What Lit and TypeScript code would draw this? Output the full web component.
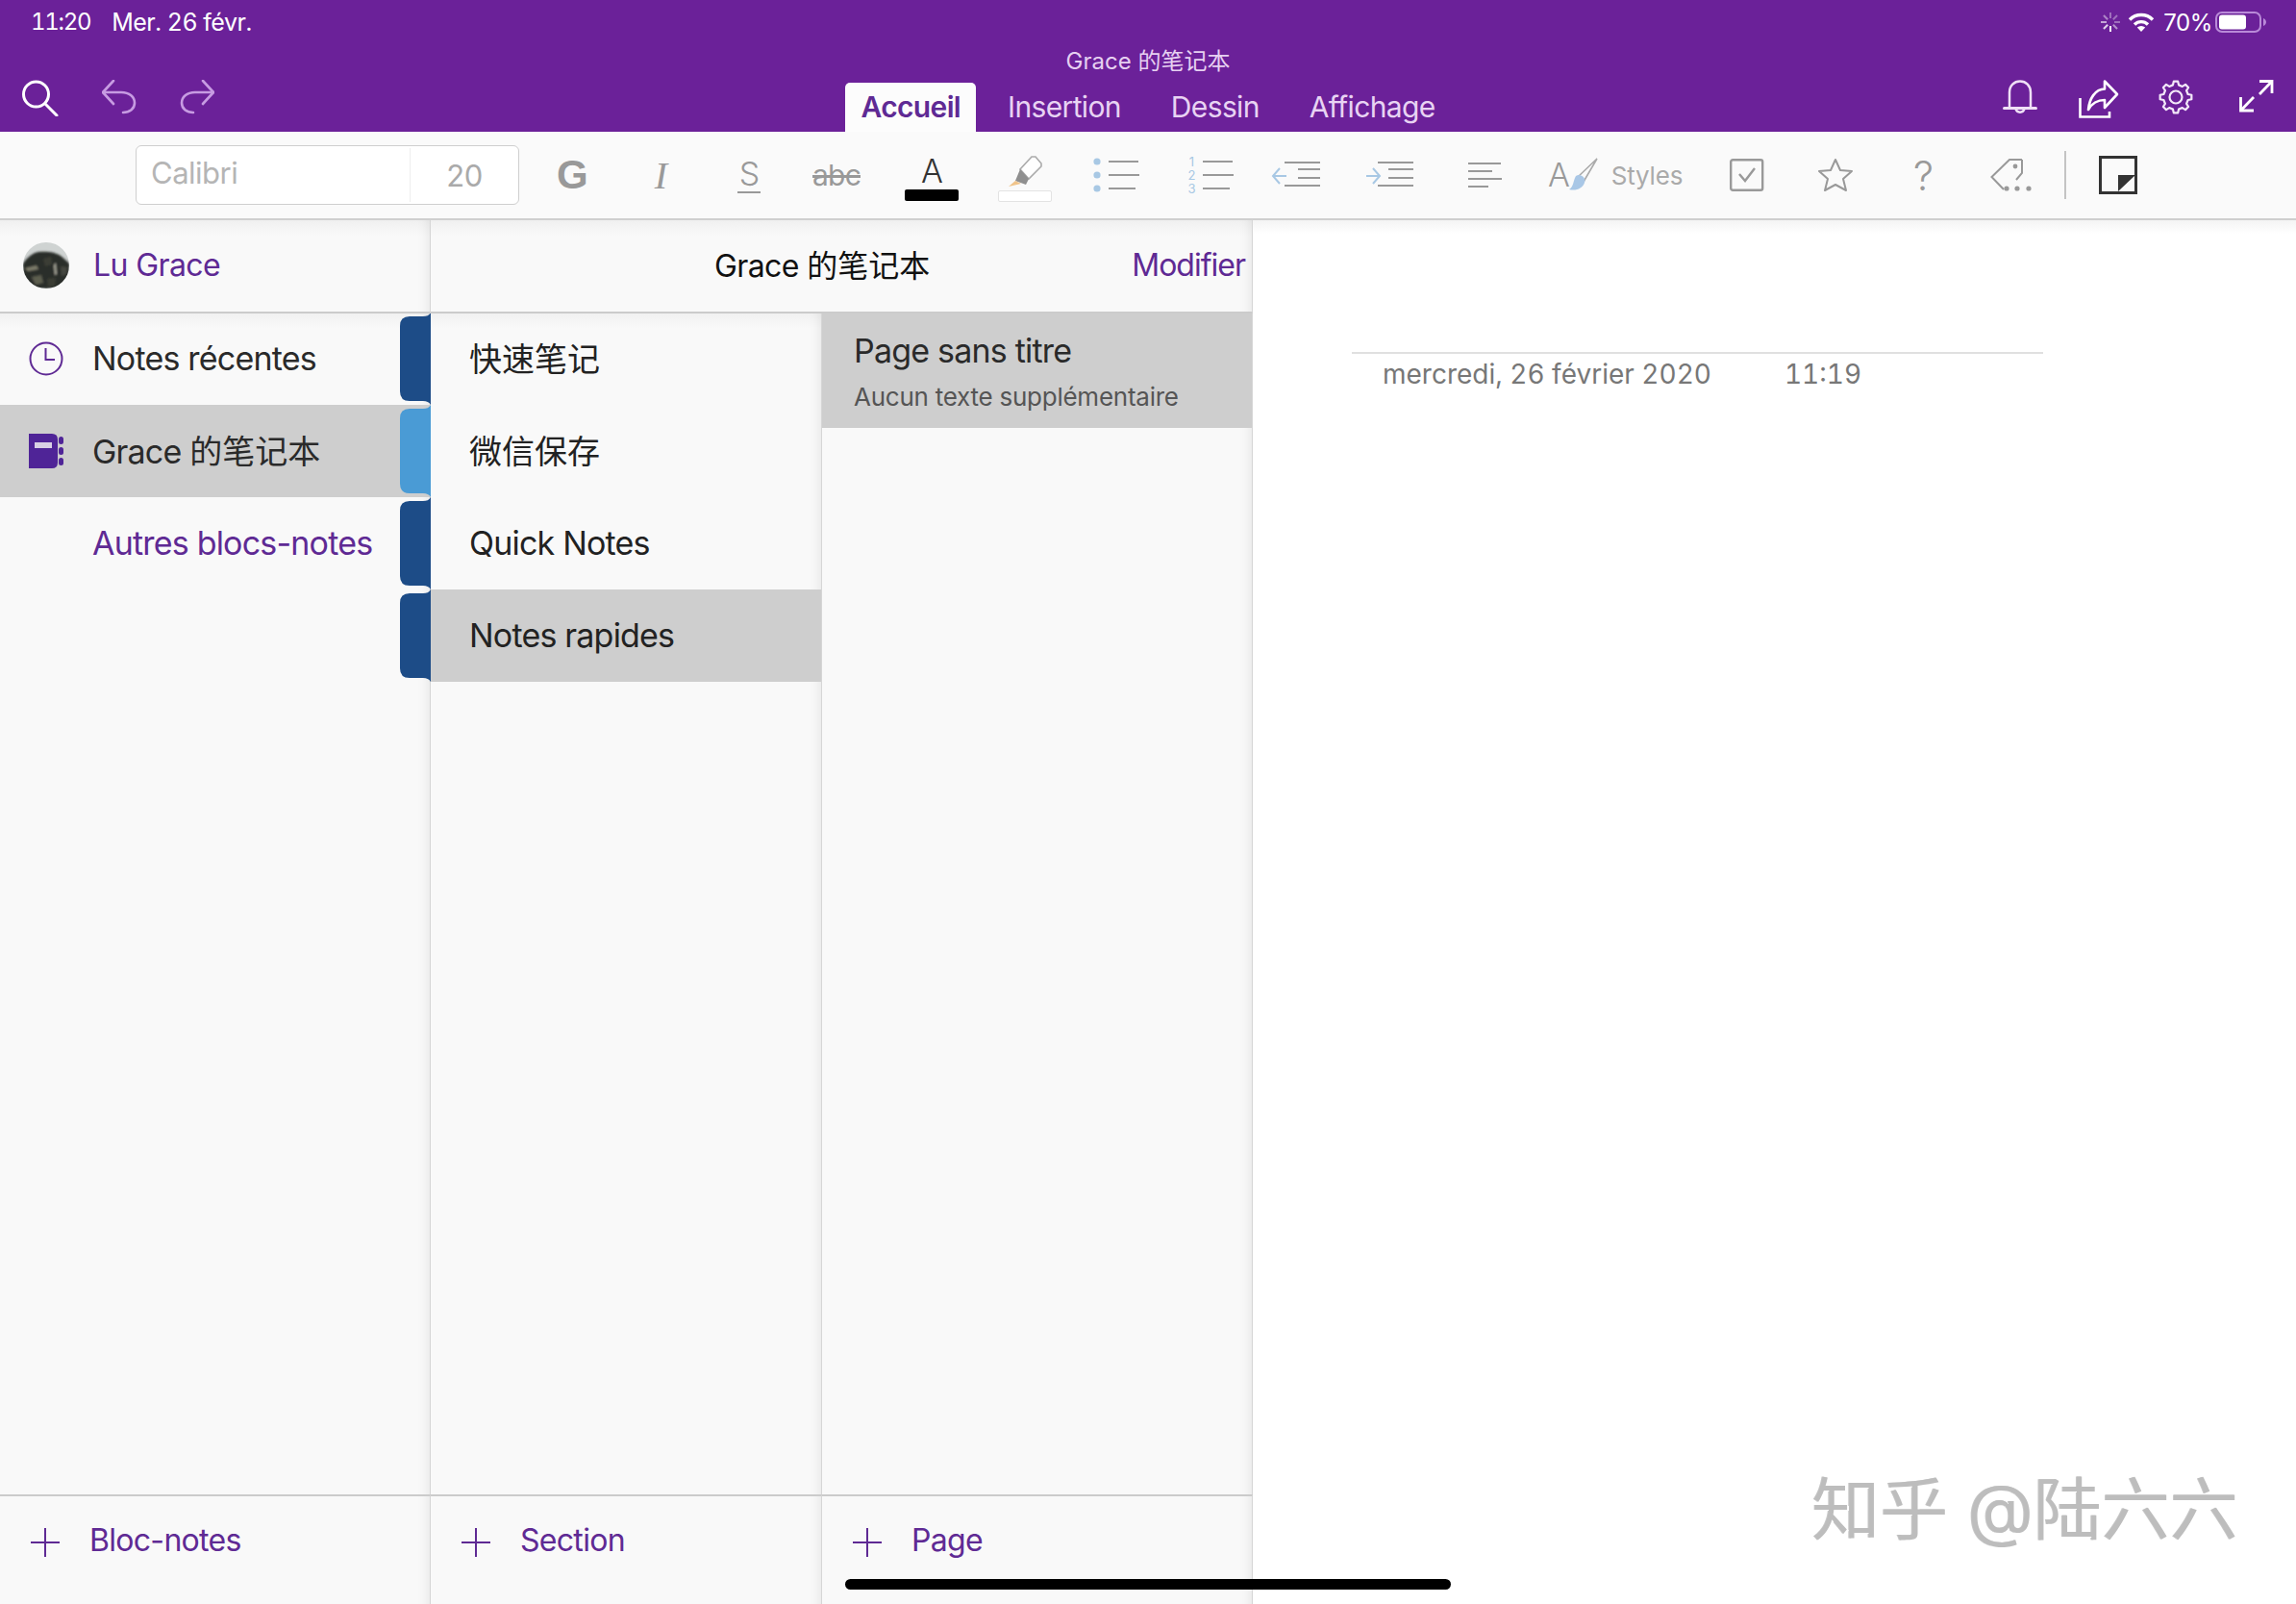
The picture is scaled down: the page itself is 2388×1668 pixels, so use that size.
import { LitElement, html, css, svg } from 'lit'
import { customElement } from 'lit/decorators.js'

const gearPath = () => {
  // eight teeth, outline only
  const pts: string[] = []
  const teeth = 8
  for (let i = 0; i < teeth; i++) {
    const a = (i / teeth) * Math.PI * 2 - Math.PI / 2
    const step = (Math.PI * 2) / teeth
    const at = (r: number, t: number) => `${(18 + r * Math.cos(t)).toFixed(2)} ${(18 + r * Math.sin(t)).toFixed(2)}`
    pts.push(`${i === 0 ? 'M' : 'L'}${at(13, a - step * 0.3)}`)
    pts.push(`L${at(16.5, a - step * 0.17)}`)
    pts.push(`L${at(16.5, a + step * 0.17)}`)
    pts.push(`L${at(13, a + step * 0.3)}`)
  }
  return pts.join(' ') + ' Z'
}

const spinnerTicks = () => {
  const out = []
  for (let i = 0; i < 8; i++) {
    const a = (i / 8) * Math.PI * 2 - Math.PI / 2
    const x1 = 11 + 4 * Math.cos(a)
    const y1 = 11 + 4 * Math.sin(a)
    const x2 = 11 + 10 * Math.cos(a)
    const y2 = 11 + 10 * Math.sin(a)
    const o = [0.35, 0.35, 0.35, 0.5, 0.95, 0.8, 0.6, 0.45][i]
    out.push(svg`<line x1=${x1} y1=${y1} x2=${x2} y2=${y2} stroke="#fff" stroke-width="2" opacity=${o} />`)
  }
  return out
}

const lines = (rows: number[][]) =>
  rows.map(([x1, x2, y]) => svg`<line x1=${x1} x2=${x2} y1=${y} y2=${y} stroke="#999" stroke-width="2" />`)

const icons = {
  search: html`<svg width="38" height="38" viewBox="0 0 38 38" fill="none" stroke="#fff" stroke-width="3" stroke-linecap="round"><circle cx="14.5" cy="15" r="13"/><line x1="24" y1="25" x2="36" y2="37"/></svg>`,
  undo: html`<svg width="36" height="36" viewBox="0 0 36 36" fill="none" stroke="#c79be2" stroke-width="2.6" stroke-linecap="round" stroke-linejoin="round"><path d="M12 1 L1 13 L12 25"/><path d="M1 13 H20 C29 13 34 18 34 24 C34 30 29 34 22 34"/></svg>`,
  redo: html`<svg width="36" height="36" viewBox="0 0 36 36" fill="none" stroke="#c79be2" stroke-width="2.6" stroke-linecap="round" stroke-linejoin="round"><path d="M24 1 L35 13 L24 25"/><path d="M35 13 H16 C7 13 2 18 2 24 C2 30 7 34 14 34"/></svg>`,
  bell: html`<svg width="36" height="38" viewBox="0 0 36 38" fill="none" stroke="#efe0f6" stroke-width="2.5" stroke-linecap="round"><path d="M7 29 V13 C7 6 12 1.5 18 1.5 C24 1.5 29 6 29 13 V29"/><path d="M1.5 29.5 H34.5" stroke-width="3"/><path d="M13.5 30 A4.6 4.6 0 0 0 22.5 30"/></svg>`,
  share: html`<svg width="42" height="40" viewBox="0 0 42 40" fill="none" stroke="#fff" stroke-width="2.6"><path d="M1.5 19 V38.5 H32 V33"/><path d="M27 1.5 L40 15 L27 29 V21 C20 21 14 24 10 31 C11 20 17 9.5 27 9.5 Z" stroke-linejoin="round"/></svg>`,
  gear: html`<svg class="gear" width="36" height="36" viewBox="0 0 36 36" fill="none" stroke="#f3e8f9" stroke-width="2.2" stroke-linejoin="round"><path d=${gearPath()}/><circle cx="18" cy="18" r="6.5"/></svg>`,
  expand: html`<svg width="36" height="34" viewBox="0 0 36 34" fill="none" stroke="#fff" stroke-width="2.8"><path d="M21 1.5 H34 V14"/><path d="M34 1.5 L21 15"/><path d="M1.5 18 V32 H15"/><path d="M1.5 32 L15 18"/></svg>`,
  spinner: html`<svg width="22" height="22" viewBox="0 0 22 22">${spinnerTicks()}</svg>`,
  wifi: html`<svg width="28" height="22" viewBox="0 0 28 22" fill="none" stroke="#fff" stroke-width="3.4"><path d="M2 8.5 A17 17 0 0 1 26 8.5"/><path d="M7 13.5 A10 10 0 0 1 21 13.5"/><path d="M14 21 L9.8 16.6 A6 6 0 0 1 18.2 16.6 Z" fill="#fff" stroke="none"/></svg>`,
  battery: html`<svg width="54" height="22" viewBox="0 0 54 22"><rect x="1" y="1" width="46" height="20" rx="6" fill="none" stroke="#b98ad8" stroke-width="2"/><rect x="4" y="3.5" width="28" height="15" rx="3" fill="#fff"/><path d="M50 7 C52 8 53 9.5 53 11 C53 12.5 52 14 50 15 Z" fill="#b98ad8"/></svg>`,
  clock: html`<svg width="36" height="36" viewBox="0 0 36 36" fill="none" stroke="#5f2a94" stroke-width="2"><circle cx="18" cy="18" r="16.5"/><path d="M17.5 7 V19 H27"/></svg>`,
  notebook: html`<svg width="36" height="36" viewBox="0 0 36 36"><path d="M0 0 H24 Q30 0 30 6 V30 Q30 36 24 36 H0 Z" fill="#4f2497"/><rect x="6" y="9" width="18" height="6" fill="#d8d0e4"/><rect x="31" y="3" width="5" height="8" rx="2.5" fill="#4f2497"/><rect x="31" y="14" width="5" height="8" rx="2.5" fill="#4f2497"/><rect x="31" y="25" width="5" height="8" rx="2.5" fill="#4f2497"/></svg>`,
  plus: html`<svg width="30" height="30" viewBox="0 0 30 30" stroke="#5f2a94" stroke-width="2"><line x1="0" x2="30" y1="15" y2="15"/><line x1="15" x2="15" y1="0" y2="30"/></svg>`,
  // photo of a hillside, only roughly painted
  avatar: html`<svg class="avatar" width="48" height="48" viewBox="0 0 48 48"><defs><filter id="soft"><feGaussianBlur stdDeviation="0.8"/></filter></defs><rect width="48" height="48" fill="#cfd3d2"/><g filter="url(#soft)"><path d="M0 22 C5 15 10 11 16 10 C24 9 34 10 39 14 C42 16 45 19 48 22 V48 H0 Z" fill="#2c2e2a"/><path d="M2 27 L14 24 L16 28 L5 30 Z" fill="#7d7c6a"/><path d="M32 24 L34 21 L35 33 L33 34 Z" fill="#a9a99c"/><path d="M9 36 L19 34 L21 42 L13 44 Z" fill="#5d5e50"/><path d="M21 17 L29 15 L30 23 L23 25 Z" fill="#3a3c35"/><path d="M39 25 L46 26 L45 33 L40 35 Z" fill="#45473f"/><path d="M25 38 L34 37 L33 45 L26 46 Z" fill="#3a3c35"/></g></svg>`
}

const tools = [
  { w: 92, body: html`<span class="t-g">G</span>` },
  { w: 92, body: html`<span class="t-i">I</span>` },
  { w: 92, body: html`<span class="t-s">S</span>` },
  { w: 90, body: html`<span class="t-abc">abc</span>` },
  { w: 108, body: html`<span class="t-color"><span class="t-a">A</span><span class="swatch black"></span></span>` },
  {
    w: 86,
    body: html`<span class="t-color"><svg width="36" height="32" viewBox="0 0 36 32"><polygon points="25,1 29,1 35,8 35,11 22,24 13,14" fill="#fff" stroke="#aaa" stroke-width="1.6"/><polygon points="13,14 22,24 19,30 8,26" fill="#8f8f8f"/><polygon points="8,26 14,29 1,32" fill="#f0c48a"/></svg><span class="swatch pale"></span></span>`
  },
  {
    w: 104,
    body: html`<svg width="48" height="40" viewBox="0 0 48 40"><circle cx="4" cy="6" r="3.6" fill="#a8c8e4"/><circle cx="4" cy="20" r="3.6" fill="#a8c8e4"/><circle cx="4" cy="34" r="3.6" fill="#a8c8e4"/>${lines([[16, 47, 6], [16, 48, 20], [16, 44, 34]])}</svg>`
  },
  {
    w: 92,
    body: html`<svg width="48" height="44" viewBox="0 0 48 44"><g class="num">${[1, 2, 3].map((n, i) => svg`<text x="4" y=${13 + i * 14} text-anchor="middle">${n}</text>`)}</g>${lines([[16, 47, 8], [16, 48, 22], [16, 44, 36]])}</svg>`
  },
  {
    w: 86,
    body: html`<svg width="52" height="34" viewBox="0 0 52 34"><path d="M9 10 L2 18 L9 26 M2 18 H16" fill="none" stroke="#a8c8e4" stroke-width="2"/>${lines([[14, 51, 4], [28, 51, 11], [28, 51, 20], [14, 51, 28]])}</svg>`
  },
  {
    w: 108,
    body: html`<svg width="52" height="34" viewBox="0 0 52 34"><path d="M9 10 L16 18 L9 26 M2 18 H16" fill="none" stroke="#a8c8e4" stroke-width="2"/>${lines([[14, 51, 4], [25, 51, 11], [25, 51, 20], [14, 51, 28]])}</svg>`
  },
  {
    w: 90,
    body: html`<svg width="36" height="28" viewBox="0 0 36 28">${lines([[1, 35, 2], [1, 26, 10], [1, 36, 18], [1, 22, 26]])}</svg>`
  },
  {
    w: 181,
    body: html`<span class="t-styles"><svg width="54" height="36" viewBox="0 0 54 36"><text class="brush-a" x="1" y="30">A</text><path d="M52 1 L31 21 M52 1 L38 25" stroke="#aaa" stroke-width="1.6" fill="none"/><path d="M30 19 C35 16 41 21 39 26 C37 32 30 35 23 33 C28 30 27 24 30 19 Z" fill="#a9c7e6"/></svg><span>Styles</span></span>`
  },
  {
    w: 94,
    body: html`<svg width="36" height="34" viewBox="0 0 36 34" fill="none"><rect x="1.2" y="1.2" width="33" height="31.6" rx="2" stroke="#999" stroke-width="2.4"/><path d="M10 16 L16 23 L26 10" stroke="#999" stroke-width="2.4"/></svg>`
  },
  {
    w: 90,
    body: html`<svg width="38" height="36" viewBox="0 0 38 36" fill="none"><path d="M19 2 L24 13 L36 14 L27 22 L30 34 L19 28 L8 34 L11 22 L2 14 L14 13 Z" stroke="#999" stroke-width="2" stroke-linejoin="round"/></svg>`
  },
  { w: 92, body: html`<span class="t-q">?</span>` },
  {
    w: 92,
    body: html`<svg width="44" height="36" viewBox="0 0 44 36" fill="none"><path d="M33 2 H20 L1.5 20 L14 33 M33 2 V16 L27 23" stroke="#999" stroke-width="2"/><circle cx="26" cy="9" r="2.4" fill="#999"/><circle cx="17" cy="32" r="2.6" fill="#999"/><circle cx="28" cy="32" r="2.6" fill="#999"/><circle cx="40" cy="32" r="2.6" fill="#999"/></svg>`
  },
  { w: 20, body: html`<span class="sep"></span>` },
  {
    w: 90,
    body: html`<svg width="40" height="40" viewBox="0 0 40 40"><rect x="1.5" y="1.5" width="37" height="37" fill="none" stroke="#333" stroke-width="3"/><polygon points="20,20 38,20 20,37" fill="#333"/></svg>`
  }
]

const sections = [
  { name: html`<span class="cjk raise">快速笔记</span>`, color: '#1d4c87' },
  { name: html`<span class="cjk raise">微信保存</span>`, color: '#4a9bd5' },
  { name: 'Quick Notes', color: '#1d4c87' },
  { name: 'Notes rapides', color: '#1d4c87', active: true }
]

@customElement('app-root')
export class AppRoot extends LitElement {
  static styles = css`
    :host {
      display: flex;
      flex-direction: column;
      position: relative;
      width: 2388px;
      height: 1668px;
      overflow: hidden;
      background: #fff;
      font-family: Inter, "Noto Sans CJK SC", sans-serif;
      font-size: 34px;
      letter-spacing: -0.8px;
      color: #2a2a2a;
    }

    svg {
      display: block;
      flex: none;
    }

    .cjk {
      letter-spacing: 0;
    }

    .raise {
      margin-bottom: 3px;
    }

    .top {
      height: 137px;
      background: #6b2199;
      display: flex;
      flex-direction: column;
      flex: none;
      color: #fff;
    }

    .status {
      height: 48px;
      box-sizing: border-box;
      padding: 0 30px 2px 32px;
      display: flex;
      align-items: center;
      justify-content: space-between;
      font-size: 25px;
      letter-spacing: -0.5px;
    }

    .status-left {
      display: flex;
      gap: 22px;
      font-variant-numeric: tabular-nums;
    }

    .time {
      font-size: 24px;
      letter-spacing: -1.3px;
    }

    .status-right {
      display: flex;
      align-items: center;
      gap: 7px;
    }

    .pct {
      margin: 0 -4px 0 2px;
      font-size: 24px;
      letter-spacing: -0.4px;
    }

    .doc-title {
      height: 28px;
      line-height: 31px;
      text-align: center;
      font-size: 24px;
      letter-spacing: 0;
      color: #e6d0f1;
    }

    .nav {
      flex: 1;
      display: grid;
      grid-template-columns: 1fr auto 1fr;
      padding: 0 23px;
    }

    .nav-left {
      display: flex;
      gap: 45px;
      padding-top: 7px;
    }

    .nav-right {
      display: flex;
      gap: 43px;
      justify-content: flex-end;
      padding-top: 7px;
    }

    .gear {
      margin: 0 5px 0 -2px;
    }

    .tabs {
      display: flex;
      gap: 20px;
      align-items: flex-end;
    }

    .tab {
      height: 51px;
      line-height: 50px;
      padding: 0 16px;
      font-size: 30px;
      letter-spacing: -0.65px;
      color: #e8d3f3;
    }

    .tab.on {
      background: #fcfcfc;
      color: #5f2a94;
      font-weight: 600;
      border-radius: 5px 5px 0 0;
      margin-right: -3px;
    }

    .toolbar {
      height: 92px;
      flex: none;
      box-sizing: border-box;
      background: #fafafa;
      border-bottom: 2px solid #cfcfcf;
      display: flex;
      align-items: center;
      padding-left: 141px;
    }

    .font-field {
      width: 399px;
      height: 62px;
      box-sizing: border-box;
      margin-right: 9px;
      background: #fff;
      border: 1.5px solid #cfcfcf;
      border-radius: 6px;
      display: grid;
      grid-template-columns: 285px 1fr;
      align-items: center;
      color: #b5b5b5;
      font-size: 31px;
      letter-spacing: -0.5px;
    }

    .font-field span:first-child {
      padding: 0 0 4px 15px;
      border-right: 1px solid #eee;
      line-height: 52px;
    }

    .font-field span:last-child {
      text-align: center;
      color: #aaa;
    }

    .tool {
      flex: none;
      display: flex;
      align-items: center;
      justify-content: center;
      color: #999;
      height: 64px;
    }

    .t-g {
      font: bold 42px "Liberation Sans", sans-serif;
    }

    .t-i {
      font: italic 40px "Liberation Serif", serif;
    }

    .t-s {
      font-size: 34px;
      font-weight: 300;
      line-height: 36px;
      border-bottom: 2px solid #999;
      padding: 0 2px;
    }

    .t-abc {
      font-size: 30px;
      text-decoration: line-through;
    }

    .t-color {
      display: flex;
      flex-direction: column;
      align-items: center;
      gap: 4px;
      padding-top: 8px;
    }

    .t-a {
      font-size: 34px;
      font-weight: 300;
      line-height: 30px;
      color: #333;
    }

    .swatch {
      width: 56px;
      height: 12px;
      box-sizing: border-box;
      border-radius: 2px;
    }

    .swatch.black {
      background: #000;
    }

    .swatch.pale {
      background: #fff;
      border: 1px solid #e3e3e3;
    }

    .t-styles {
      display: flex;
      align-items: center;
      gap: 13px;
      font-size: 26px;
      letter-spacing: -0.2px;
      color: #aaa;
    }

    .brush-a {
      font-size: 34px;
      font-weight: 300;
      fill: #999;
    }

    .num text {
      font-size: 13px;
      fill: #a8c8e4;
    }

    .t-q {
      font-size: 42px;
      font-weight: 300;
    }

    .sep {
      width: 2px;
      height: 50px;
      background: #c4c4c4;
    }

    .board {
      flex: 1;
      display: grid;
      grid-template-columns: 448px 407px 448px 1fr;
      grid-template-rows: 97px 1fr 114px;
    }

    .cell {
      background: #f9f9f9;
      box-sizing: border-box;
      position: relative;
    }

    .edge {
      border-right: 1px solid #d6d6d6;
      box-shadow: inset -14px 0 14px -14px rgba(0, 0, 0, 0.1);
    }

    .fade {
      background: linear-gradient(#f0f0f0, #f9f9f9 16px);
    }

    .head {
      border-bottom: 2px solid #cbcbcb;
      display: flex;
      align-items: center;
      z-index: 1;
      padding-bottom: 2px;
      font-size: 32px;
      letter-spacing: -0.6px;
    }

    .list {
      margin-top: -1px;
    }

    .avatar {
      border-radius: 50%;
      margin: 0 25px 0 24px;
    }

    .link {
      color: #5f2a94;
    }

    .head-mid {
      grid-column: span 2;
    }

    .head-mid .name {
      margin: 0 0 3px 295px;
      color: #111;
    }

    .head-mid .link {
      margin-left: auto;
      margin-right: 7px;
      letter-spacing: -1px;
    }

    .main {
      grid-column: 4;
      grid-row: 1 / span 3;
      background: linear-gradient(#f4f4f4, #fff 14px);
      padding-top: 137px;
    }

    .rule {
      margin-left: 103px;
      width: 719px;
      height: 2px;
      background: #e0e0e0;
    }

    .stamp {
      display: flex;
      gap: 76px;
      padding: 4px 0 0 135px;
      font-size: 28px;
      letter-spacing: 0;
      font-variant-numeric: tabular-nums;
      color: #777;
    }

    .row {
      height: 96px;
      box-sizing: border-box;
      padding-bottom: 1px;
      display: flex;
      align-items: center;
    }

    .row.on {
      background: #cecece;
    }

    .row .ic {
      width: 96px;
      padding-left: 30px;
      box-sizing: border-box;
      flex: none;
    }

    .section {
      position: relative;
      padding-left: 40px;
      color: #222;
    }

    .section svg {
      position: absolute;
      left: -32px;
      top: 0;
    }

    .page {
      height: 120px;
      background: #cecece;
      padding: 18px 0 0 33px;
      box-sizing: border-box;
    }

    .page-title {
      font-size: 34px;
      line-height: 44px;
      letter-spacing: -0.8px;
      color: #2a2a2a;
    }

    .page-sub {
      font-size: 26px;
      line-height: 32px;
      margin-top: 10px;
      letter-spacing: -0.25px;
      color: #555;
    }

    .foot {
      border-top: 2px solid #cbcbcb;
      display: flex;
      align-items: flex-start;
      gap: 31px;
      padding: 33px 0 0 32px;
      font-size: 32px;
      letter-spacing: -0.7px;
      line-height: 26px;
      color: #5f2a94;
    }

    .watermark {
      position: absolute;
      right: 60px;
      top: 1522px;
      font-size: 71px;
      line-height: 94px;
      letter-spacing: 0;
      color: #bdbdbd;
      text-shadow: 2px 1px 0 #fff, -1px 0 0 #c8c8c8;
    }

    .home {
      position: absolute;
      left: 879px;
      top: 1642px;
      width: 630px;
      height: 11px;
      border-radius: 6px;
      background: #000;
    }
  `

  render () {
    return html`
      <div class="top">
        <div class="status">
          <div class="status-left"><span class="time">11:20</span><span>Mer. 26 févr.</span></div>
          <div class="status-right">${icons.spinner}${icons.wifi}<span class="pct">70%</span>${icons.battery}</div>
        </div>
        <div class="doc-title">Grace 的笔记本</div>
        <div class="nav">
          <div class="nav-left">${icons.search}${icons.undo}${icons.redo}</div>
          <div class="tabs">
            <span class="tab on">Accueil</span>
            <span class="tab">Insertion</span>
            <span class="tab">Dessin</span>
            <span class="tab">Affichage</span>
          </div>
          <div class="nav-right">${icons.bell}${icons.share}${icons.gear}${icons.expand}</div>
        </div>
      </div>

      <div class="toolbar">
        <div class="font-field"><span>Calibri</span><span>20</span></div>
        ${tools.map(t => html`<div class="tool" style="width:${t.w}px">${t.body}</div>`)}
      </div>

      <div class="board">
        <div class="cell edge fade head">${icons.avatar}<span class="link">Lu Grace</span></div>
        <div class="cell edge fade head head-mid">
          <span class="name">Grace <span class="cjk">的笔记本</span></span>
          <span class="link">Modifier</span>
        </div>
        <div class="main">
          <div class="rule"></div>
          <div class="stamp"><span>mercredi, 26 février 2020</span><span>11:19</span></div>
        </div>

        <div class="cell edge fade list">
          <div class="row"><span class="ic">${icons.clock}</span>Notes récentes</div>
          <div class="row on"><span class="ic">${icons.notebook}</span><span class="raise">Grace <span class="cjk">的笔记本</span></span></div>
          <div class="row link"><span class="ic"></span>Autres blocs-notes</div>
        </div>
        <div class="cell edge fade list">
          ${sections.map(s => html`
            <div class="row section ${s.active ? 'on' : ''}">
              <svg width="32" height="96" viewBox="0 0 32 96"><path d="M32 0 C30 3 28 4 24 4 H10 Q0 4 0 14 V82 Q0 92 10 92 H24 C28 92 30 93 32 96 Z" fill=${s.color} /></svg>
              ${s.name}
            </div>
          `)}
        </div>
        <div class="cell edge fade list">
          <div class="page">
            <div class="page-title">Page sans titre</div>
            <div class="page-sub">Aucun texte supplémentaire</div>
          </div>
        </div>

        <div class="cell edge foot">${icons.plus}<span>Bloc-notes</span></div>
        <div class="cell edge foot">${icons.plus}<span>Section</span></div>
        <div class="cell edge foot">${icons.plus}<span>Page</span></div>
      </div>

      <div class="watermark">知乎 @陆六六</div>
      <div class="home"></div>
    `
  }
}
